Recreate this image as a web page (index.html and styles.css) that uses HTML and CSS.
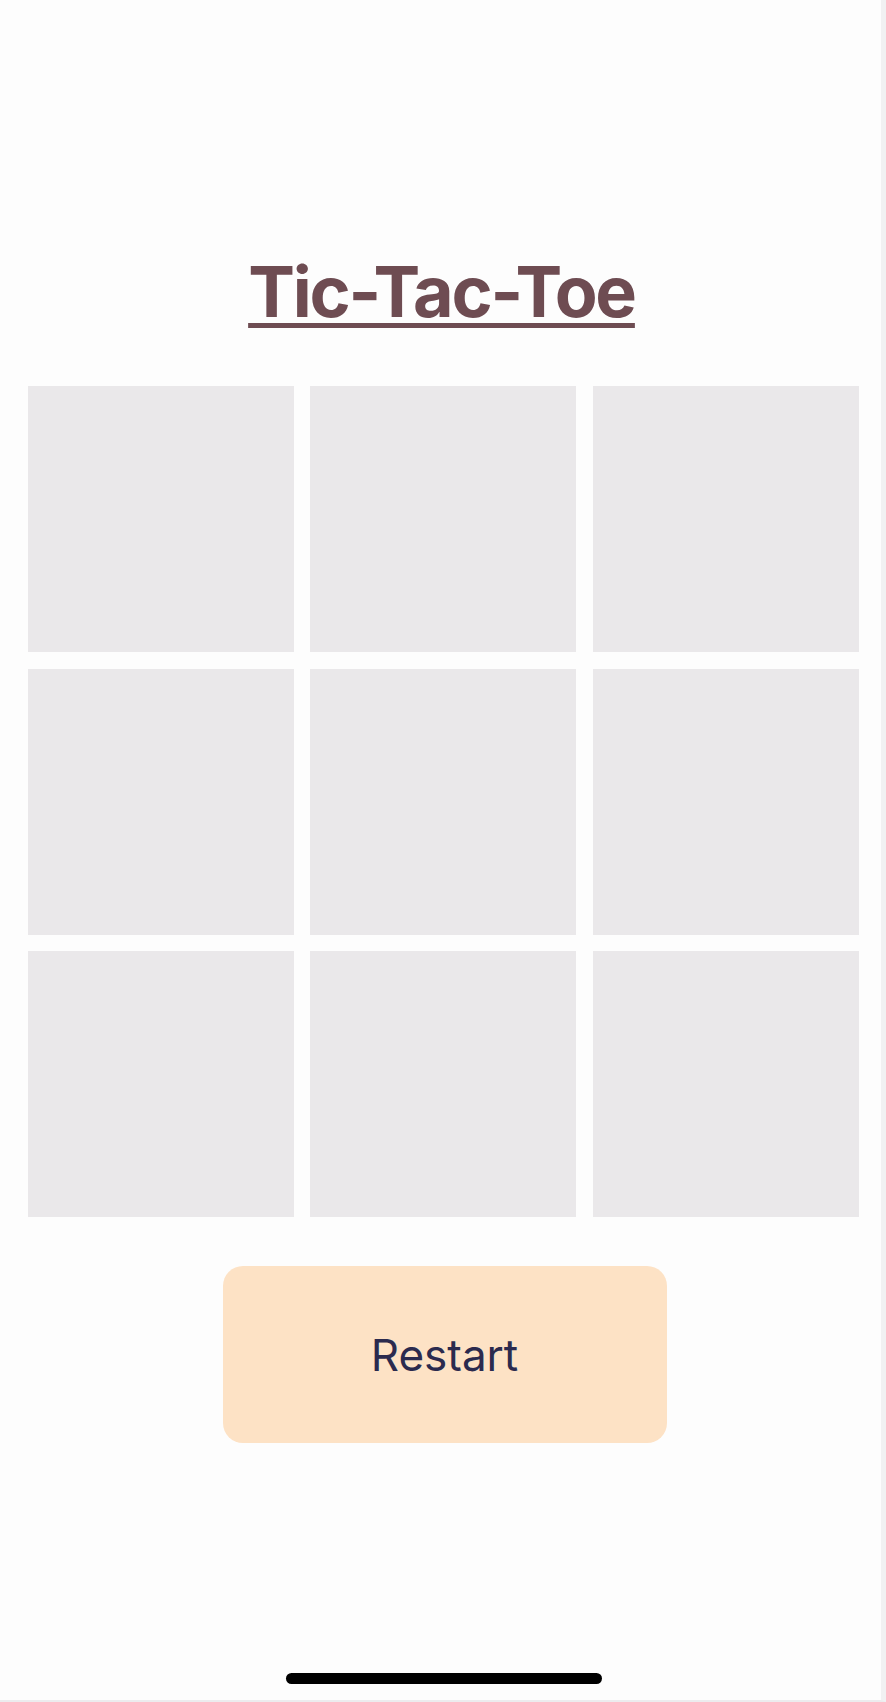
FILE: index.html
```html
<!DOCTYPE html>
<html>
<head>
<meta charset="utf-8">
<link rel="stylesheet" href="styles.css">
</head>
<body>
<div class="screen">
  <main class="app">
    <h1 class="title">Tic-Tac-Toe</h1>
    <div class="board">
      <div class="cell"></div>
      <div class="cell"></div>
      <div class="cell"></div>
      <div class="cell"></div>
      <div class="cell"></div>
      <div class="cell"></div>
      <div class="cell"></div>
      <div class="cell"></div>
      <div class="cell"></div>
    </div>
    <button class="restart">Restart</button>
  </main>
  <div class="home-bar"><span class="home-indicator"></span></div>
</div>
</body>
</html>
```

FILE: styles.css
```css
html, body {
  margin: 0;
  padding: 0;
  background: #fdfdfd;
}
body {
  font-family: Inter, "Noto Sans", sans-serif;
}
.screen {
  width: 881px;
  height: 1700px;
  border-right: 5px solid #f1f1f2;
  border-bottom: 2px solid #ececee;
  background: #fdfdfd;
  display: flex;
  flex-direction: column;
}
.app {
  flex: 1;
  display: flex;
  flex-direction: column;
  align-items: center;
  padding-top: 250px;
}
.title {
  margin: 0;
  font-size: 70px;
  line-height: 84px;
  font-weight: 700;
  color: #6e4c52;
  text-decoration: underline;
  text-decoration-thickness: 5px;
  text-underline-offset: 6px;
  letter-spacing: -2.2px;
  padding-left: 2px;
}
.board {
  margin-top: 52px;
  margin-left: 5px;
  display: grid;
  grid-template-columns: repeat(3, 266px);
  grid-template-rows: repeat(3, 266px);
  gap: 16.5px;
}
.cell {
  background: #eae8ea;
}
.restart {
  margin-top: 49px;
  margin-left: 8px;
  width: 444px;
  height: 177px;
  border: none;
  border-radius: 20px;
  background: #fde2c5;
  color: #2b2a4e;
  font-family: Inter, "Noto Sans", sans-serif;
  font-size: 44px;
  font-weight: 400;
  padding: 0;
}
.home-bar {
  height: 27px;
  display: flex;
  justify-content: center;
  padding-left: 6px;
}
.home-indicator {
  display: block;
  width: 316px;
  height: 11px;
  border-radius: 6px;
  background: #000;
}
```
